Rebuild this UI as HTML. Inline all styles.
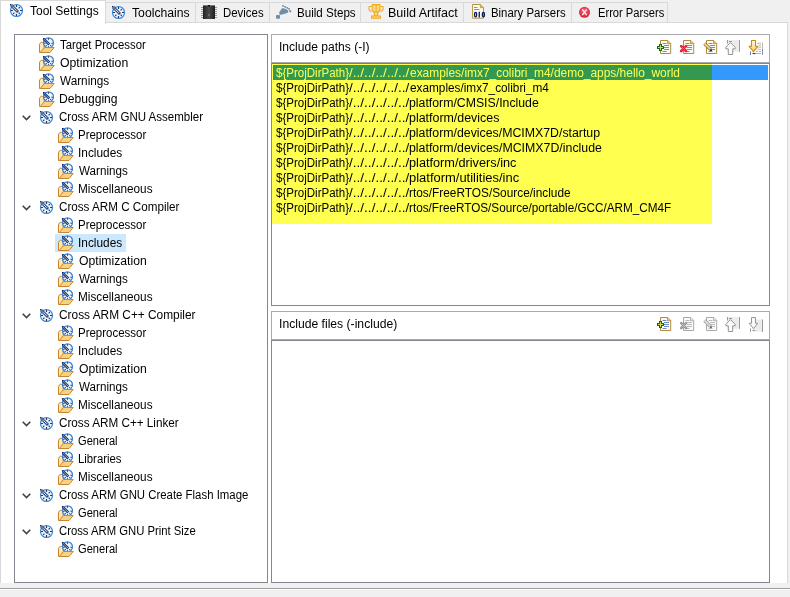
<!DOCTYPE html>
<html><head><meta charset="utf-8"><style>
html,body{margin:0;padding:0;width:790px;height:597px;overflow:hidden;background:#f0f0f0;position:relative}
*{box-sizing:border-box}
.a{position:absolute}
.t{position:absolute;font-family:"Liberation Sans", sans-serif;font-size:12px;line-height:15px;white-space:nowrap;transform-origin:0 0}
svg.i{position:absolute;width:16px;height:16px;overflow:visible}
</style></head><body>
<svg class="a" style="left:0;top:0;z-index:1" width="790" height="597" viewBox="0 0 790 597"><defs><linearGradient id="gv" x1="0" y1="0" x2="0" y2="1"><stop offset="0" stop-color="#c8c8a0"/><stop offset="1" stop-color="#7080b0"/></linearGradient><linearGradient id="gd" x1="0" y1="0" x2="0" y2="1"><stop offset="0" stop-color="#fffdf0"/><stop offset="1" stop-color="#f8d060"/></linearGradient><linearGradient id="gc" x1="0" y1="0" x2="1" y2="0"><stop offset="0" stop-color="#222"/><stop offset="0.5" stop-color="#4a4a4a"/><stop offset="1" stop-color="#1e1e1e"/></linearGradient><radialGradient id="ge" cx="0.5" cy="0.4" r="0.6"><stop offset="0" stop-color="#f47080"/><stop offset="1" stop-color="#dc1c30"/></radialGradient></defs><g transform="translate(9,2)">
  <circle cx="7.5" cy="8.5" r="6" fill="#eef4fb" stroke="#3a86d4" stroke-width="1.2"/>
  <g stroke="#1f3a68" stroke-width="1.2">
   <path d="M7.5 3v2M7.5 12v2M2 8.5h2M11 8.5h2M4.2 11.8l1.2-1.2M10.8 11.8l-1.2-1.2M10.8 5.2l-1.2 1.2"/>
  </g>
  <path d="M2 3 L9 10" stroke="#1a3c8c" stroke-width="2.8"/>
  <path d="M2.6 3.6 L8.2 9.2" stroke="#f6eeb0" stroke-width="1.2" stroke-dasharray="1.1 0.6"/>
  <rect x="1" y="2" width="1.1" height="1.1" fill="#202048"/>
 </g><g transform="translate(111,4)">
  <circle cx="7.5" cy="8.5" r="6" fill="#eef4fb" stroke="#3a86d4" stroke-width="1.2"/>
  <g stroke="#1f3a68" stroke-width="1.2">
   <path d="M7.5 3v2M7.5 12v2M2 8.5h2M11 8.5h2M4.2 11.8l1.2-1.2M10.8 11.8l-1.2-1.2M10.8 5.2l-1.2 1.2"/>
  </g>
  <path d="M2 3 L9 10" stroke="#1a3c8c" stroke-width="2.8"/>
  <path d="M2.6 3.6 L8.2 9.2" stroke="#f6eeb0" stroke-width="1.2" stroke-dasharray="1.1 0.6"/>
  <rect x="1" y="2" width="1.1" height="1.1" fill="#202048"/>
 </g><g transform="translate(39,37)">
  <path d="M0.5 7.2 L2.2 5.2 L3.5 5.2 L5.2 7 L5.2 15.5 L0.5 15.5 Z" fill="#fbe8b8" stroke="#c8852e" stroke-width="1"/>
  <circle cx="9.5" cy="5.8" r="5" fill="#f2f6fb" stroke="#3a80d0" stroke-width="1.2"/>
  <g stroke="#1f3a68" stroke-width="1.1"><path d="M9.5 1.3v1.4M12.4 6.3h1.5M5.1 6.3h1.5M12.2 8.9l-0.9-0.8M6.8 8.9l0.9-0.8M9.5 9.2v1"/></g>
  <path d="M4.6 1.8 L10.3 7.5" stroke="#173a8c" stroke-width="2.6"/>
  <path d="M5.3 2.5 L9.6 6.8" stroke="#f4eaa0" stroke-width="1" stroke-dasharray="1 0.7"/>
  <rect x="4" y="1" width="1.1" height="1.1" fill="#20204a"/>
  <path d="M5.5 10.5 L15.2 10.5 L11 15.5 L1.2 15.5 Z" fill="#f6d382" stroke="#c8852e" stroke-width="1" stroke-linejoin="round"/>
 </g><g transform="translate(39,55)">
  <path d="M0.5 7.2 L2.2 5.2 L3.5 5.2 L5.2 7 L5.2 15.5 L0.5 15.5 Z" fill="#fbe8b8" stroke="#c8852e" stroke-width="1"/>
  <circle cx="9.5" cy="5.8" r="5" fill="#f2f6fb" stroke="#3a80d0" stroke-width="1.2"/>
  <g stroke="#1f3a68" stroke-width="1.1"><path d="M9.5 1.3v1.4M12.4 6.3h1.5M5.1 6.3h1.5M12.2 8.9l-0.9-0.8M6.8 8.9l0.9-0.8M9.5 9.2v1"/></g>
  <path d="M4.6 1.8 L10.3 7.5" stroke="#173a8c" stroke-width="2.6"/>
  <path d="M5.3 2.5 L9.6 6.8" stroke="#f4eaa0" stroke-width="1" stroke-dasharray="1 0.7"/>
  <rect x="4" y="1" width="1.1" height="1.1" fill="#20204a"/>
  <path d="M5.5 10.5 L15.2 10.5 L11 15.5 L1.2 15.5 Z" fill="#f6d382" stroke="#c8852e" stroke-width="1" stroke-linejoin="round"/>
 </g><g transform="translate(39,73)">
  <path d="M0.5 7.2 L2.2 5.2 L3.5 5.2 L5.2 7 L5.2 15.5 L0.5 15.5 Z" fill="#fbe8b8" stroke="#c8852e" stroke-width="1"/>
  <circle cx="9.5" cy="5.8" r="5" fill="#f2f6fb" stroke="#3a80d0" stroke-width="1.2"/>
  <g stroke="#1f3a68" stroke-width="1.1"><path d="M9.5 1.3v1.4M12.4 6.3h1.5M5.1 6.3h1.5M12.2 8.9l-0.9-0.8M6.8 8.9l0.9-0.8M9.5 9.2v1"/></g>
  <path d="M4.6 1.8 L10.3 7.5" stroke="#173a8c" stroke-width="2.6"/>
  <path d="M5.3 2.5 L9.6 6.8" stroke="#f4eaa0" stroke-width="1" stroke-dasharray="1 0.7"/>
  <rect x="4" y="1" width="1.1" height="1.1" fill="#20204a"/>
  <path d="M5.5 10.5 L15.2 10.5 L11 15.5 L1.2 15.5 Z" fill="#f6d382" stroke="#c8852e" stroke-width="1" stroke-linejoin="round"/>
 </g><g transform="translate(39,91)">
  <path d="M0.5 7.2 L2.2 5.2 L3.5 5.2 L5.2 7 L5.2 15.5 L0.5 15.5 Z" fill="#fbe8b8" stroke="#c8852e" stroke-width="1"/>
  <circle cx="9.5" cy="5.8" r="5" fill="#f2f6fb" stroke="#3a80d0" stroke-width="1.2"/>
  <g stroke="#1f3a68" stroke-width="1.1"><path d="M9.5 1.3v1.4M12.4 6.3h1.5M5.1 6.3h1.5M12.2 8.9l-0.9-0.8M6.8 8.9l0.9-0.8M9.5 9.2v1"/></g>
  <path d="M4.6 1.8 L10.3 7.5" stroke="#173a8c" stroke-width="2.6"/>
  <path d="M5.3 2.5 L9.6 6.8" stroke="#f4eaa0" stroke-width="1" stroke-dasharray="1 0.7"/>
  <rect x="4" y="1" width="1.1" height="1.1" fill="#20204a"/>
  <path d="M5.5 10.5 L15.2 10.5 L11 15.5 L1.2 15.5 Z" fill="#f6d382" stroke="#c8852e" stroke-width="1" stroke-linejoin="round"/>
 </g><g transform="translate(22,115)"><path d="M0.7 0.7 L4.5 4.5 L8.3 0.7" fill="none" stroke="#444" stroke-width="1.6"/></g><g transform="translate(39,109)">
  <circle cx="7.5" cy="8.5" r="6" fill="#eef4fb" stroke="#3a86d4" stroke-width="1.2"/>
  <g stroke="#1f3a68" stroke-width="1.2">
   <path d="M7.5 3v2M7.5 12v2M2 8.5h2M11 8.5h2M4.2 11.8l1.2-1.2M10.8 11.8l-1.2-1.2M10.8 5.2l-1.2 1.2"/>
  </g>
  <path d="M2 3 L9 10" stroke="#1a3c8c" stroke-width="2.8"/>
  <path d="M2.6 3.6 L8.2 9.2" stroke="#f6eeb0" stroke-width="1.2" stroke-dasharray="1.1 0.6"/>
  <rect x="1" y="2" width="1.1" height="1.1" fill="#202048"/>
 </g><g transform="translate(58,127)">
  <path d="M0.5 7.2 L2.2 5.2 L3.5 5.2 L5.2 7 L5.2 15.5 L0.5 15.5 Z" fill="#fbe8b8" stroke="#c8852e" stroke-width="1"/>
  <circle cx="9.5" cy="5.8" r="5" fill="#f2f6fb" stroke="#3a80d0" stroke-width="1.2"/>
  <g stroke="#1f3a68" stroke-width="1.1"><path d="M9.5 1.3v1.4M12.4 6.3h1.5M5.1 6.3h1.5M12.2 8.9l-0.9-0.8M6.8 8.9l0.9-0.8M9.5 9.2v1"/></g>
  <path d="M4.6 1.8 L10.3 7.5" stroke="#173a8c" stroke-width="2.6"/>
  <path d="M5.3 2.5 L9.6 6.8" stroke="#f4eaa0" stroke-width="1" stroke-dasharray="1 0.7"/>
  <rect x="4" y="1" width="1.1" height="1.1" fill="#20204a"/>
  <path d="M5.5 10.5 L15.2 10.5 L11 15.5 L1.2 15.5 Z" fill="#f6d382" stroke="#c8852e" stroke-width="1" stroke-linejoin="round"/>
 </g><g transform="translate(58,145)">
  <path d="M0.5 7.2 L2.2 5.2 L3.5 5.2 L5.2 7 L5.2 15.5 L0.5 15.5 Z" fill="#fbe8b8" stroke="#c8852e" stroke-width="1"/>
  <circle cx="9.5" cy="5.8" r="5" fill="#f2f6fb" stroke="#3a80d0" stroke-width="1.2"/>
  <g stroke="#1f3a68" stroke-width="1.1"><path d="M9.5 1.3v1.4M12.4 6.3h1.5M5.1 6.3h1.5M12.2 8.9l-0.9-0.8M6.8 8.9l0.9-0.8M9.5 9.2v1"/></g>
  <path d="M4.6 1.8 L10.3 7.5" stroke="#173a8c" stroke-width="2.6"/>
  <path d="M5.3 2.5 L9.6 6.8" stroke="#f4eaa0" stroke-width="1" stroke-dasharray="1 0.7"/>
  <rect x="4" y="1" width="1.1" height="1.1" fill="#20204a"/>
  <path d="M5.5 10.5 L15.2 10.5 L11 15.5 L1.2 15.5 Z" fill="#f6d382" stroke="#c8852e" stroke-width="1" stroke-linejoin="round"/>
 </g><g transform="translate(58,163)">
  <path d="M0.5 7.2 L2.2 5.2 L3.5 5.2 L5.2 7 L5.2 15.5 L0.5 15.5 Z" fill="#fbe8b8" stroke="#c8852e" stroke-width="1"/>
  <circle cx="9.5" cy="5.8" r="5" fill="#f2f6fb" stroke="#3a80d0" stroke-width="1.2"/>
  <g stroke="#1f3a68" stroke-width="1.1"><path d="M9.5 1.3v1.4M12.4 6.3h1.5M5.1 6.3h1.5M12.2 8.9l-0.9-0.8M6.8 8.9l0.9-0.8M9.5 9.2v1"/></g>
  <path d="M4.6 1.8 L10.3 7.5" stroke="#173a8c" stroke-width="2.6"/>
  <path d="M5.3 2.5 L9.6 6.8" stroke="#f4eaa0" stroke-width="1" stroke-dasharray="1 0.7"/>
  <rect x="4" y="1" width="1.1" height="1.1" fill="#20204a"/>
  <path d="M5.5 10.5 L15.2 10.5 L11 15.5 L1.2 15.5 Z" fill="#f6d382" stroke="#c8852e" stroke-width="1" stroke-linejoin="round"/>
 </g><g transform="translate(58,181)">
  <path d="M0.5 7.2 L2.2 5.2 L3.5 5.2 L5.2 7 L5.2 15.5 L0.5 15.5 Z" fill="#fbe8b8" stroke="#c8852e" stroke-width="1"/>
  <circle cx="9.5" cy="5.8" r="5" fill="#f2f6fb" stroke="#3a80d0" stroke-width="1.2"/>
  <g stroke="#1f3a68" stroke-width="1.1"><path d="M9.5 1.3v1.4M12.4 6.3h1.5M5.1 6.3h1.5M12.2 8.9l-0.9-0.8M6.8 8.9l0.9-0.8M9.5 9.2v1"/></g>
  <path d="M4.6 1.8 L10.3 7.5" stroke="#173a8c" stroke-width="2.6"/>
  <path d="M5.3 2.5 L9.6 6.8" stroke="#f4eaa0" stroke-width="1" stroke-dasharray="1 0.7"/>
  <rect x="4" y="1" width="1.1" height="1.1" fill="#20204a"/>
  <path d="M5.5 10.5 L15.2 10.5 L11 15.5 L1.2 15.5 Z" fill="#f6d382" stroke="#c8852e" stroke-width="1" stroke-linejoin="round"/>
 </g><g transform="translate(22,205)"><path d="M0.7 0.7 L4.5 4.5 L8.3 0.7" fill="none" stroke="#444" stroke-width="1.6"/></g><g transform="translate(39,199)">
  <circle cx="7.5" cy="8.5" r="6" fill="#eef4fb" stroke="#3a86d4" stroke-width="1.2"/>
  <g stroke="#1f3a68" stroke-width="1.2">
   <path d="M7.5 3v2M7.5 12v2M2 8.5h2M11 8.5h2M4.2 11.8l1.2-1.2M10.8 11.8l-1.2-1.2M10.8 5.2l-1.2 1.2"/>
  </g>
  <path d="M2 3 L9 10" stroke="#1a3c8c" stroke-width="2.8"/>
  <path d="M2.6 3.6 L8.2 9.2" stroke="#f6eeb0" stroke-width="1.2" stroke-dasharray="1.1 0.6"/>
  <rect x="1" y="2" width="1.1" height="1.1" fill="#202048"/>
 </g><g transform="translate(58,217)">
  <path d="M0.5 7.2 L2.2 5.2 L3.5 5.2 L5.2 7 L5.2 15.5 L0.5 15.5 Z" fill="#fbe8b8" stroke="#c8852e" stroke-width="1"/>
  <circle cx="9.5" cy="5.8" r="5" fill="#f2f6fb" stroke="#3a80d0" stroke-width="1.2"/>
  <g stroke="#1f3a68" stroke-width="1.1"><path d="M9.5 1.3v1.4M12.4 6.3h1.5M5.1 6.3h1.5M12.2 8.9l-0.9-0.8M6.8 8.9l0.9-0.8M9.5 9.2v1"/></g>
  <path d="M4.6 1.8 L10.3 7.5" stroke="#173a8c" stroke-width="2.6"/>
  <path d="M5.3 2.5 L9.6 6.8" stroke="#f4eaa0" stroke-width="1" stroke-dasharray="1 0.7"/>
  <rect x="4" y="1" width="1.1" height="1.1" fill="#20204a"/>
  <path d="M5.5 10.5 L15.2 10.5 L11 15.5 L1.2 15.5 Z" fill="#f6d382" stroke="#c8852e" stroke-width="1" stroke-linejoin="round"/>
 </g><g transform="translate(58,235)">
  <path d="M0.5 7.2 L2.2 5.2 L3.5 5.2 L5.2 7 L5.2 15.5 L0.5 15.5 Z" fill="#fbe8b8" stroke="#c8852e" stroke-width="1"/>
  <circle cx="9.5" cy="5.8" r="5" fill="#f2f6fb" stroke="#3a80d0" stroke-width="1.2"/>
  <g stroke="#1f3a68" stroke-width="1.1"><path d="M9.5 1.3v1.4M12.4 6.3h1.5M5.1 6.3h1.5M12.2 8.9l-0.9-0.8M6.8 8.9l0.9-0.8M9.5 9.2v1"/></g>
  <path d="M4.6 1.8 L10.3 7.5" stroke="#173a8c" stroke-width="2.6"/>
  <path d="M5.3 2.5 L9.6 6.8" stroke="#f4eaa0" stroke-width="1" stroke-dasharray="1 0.7"/>
  <rect x="4" y="1" width="1.1" height="1.1" fill="#20204a"/>
  <path d="M5.5 10.5 L15.2 10.5 L11 15.5 L1.2 15.5 Z" fill="#f6d382" stroke="#c8852e" stroke-width="1" stroke-linejoin="round"/>
 </g><g transform="translate(58,253)">
  <path d="M0.5 7.2 L2.2 5.2 L3.5 5.2 L5.2 7 L5.2 15.5 L0.5 15.5 Z" fill="#fbe8b8" stroke="#c8852e" stroke-width="1"/>
  <circle cx="9.5" cy="5.8" r="5" fill="#f2f6fb" stroke="#3a80d0" stroke-width="1.2"/>
  <g stroke="#1f3a68" stroke-width="1.1"><path d="M9.5 1.3v1.4M12.4 6.3h1.5M5.1 6.3h1.5M12.2 8.9l-0.9-0.8M6.8 8.9l0.9-0.8M9.5 9.2v1"/></g>
  <path d="M4.6 1.8 L10.3 7.5" stroke="#173a8c" stroke-width="2.6"/>
  <path d="M5.3 2.5 L9.6 6.8" stroke="#f4eaa0" stroke-width="1" stroke-dasharray="1 0.7"/>
  <rect x="4" y="1" width="1.1" height="1.1" fill="#20204a"/>
  <path d="M5.5 10.5 L15.2 10.5 L11 15.5 L1.2 15.5 Z" fill="#f6d382" stroke="#c8852e" stroke-width="1" stroke-linejoin="round"/>
 </g><g transform="translate(58,271)">
  <path d="M0.5 7.2 L2.2 5.2 L3.5 5.2 L5.2 7 L5.2 15.5 L0.5 15.5 Z" fill="#fbe8b8" stroke="#c8852e" stroke-width="1"/>
  <circle cx="9.5" cy="5.8" r="5" fill="#f2f6fb" stroke="#3a80d0" stroke-width="1.2"/>
  <g stroke="#1f3a68" stroke-width="1.1"><path d="M9.5 1.3v1.4M12.4 6.3h1.5M5.1 6.3h1.5M12.2 8.9l-0.9-0.8M6.8 8.9l0.9-0.8M9.5 9.2v1"/></g>
  <path d="M4.6 1.8 L10.3 7.5" stroke="#173a8c" stroke-width="2.6"/>
  <path d="M5.3 2.5 L9.6 6.8" stroke="#f4eaa0" stroke-width="1" stroke-dasharray="1 0.7"/>
  <rect x="4" y="1" width="1.1" height="1.1" fill="#20204a"/>
  <path d="M5.5 10.5 L15.2 10.5 L11 15.5 L1.2 15.5 Z" fill="#f6d382" stroke="#c8852e" stroke-width="1" stroke-linejoin="round"/>
 </g><g transform="translate(58,289)">
  <path d="M0.5 7.2 L2.2 5.2 L3.5 5.2 L5.2 7 L5.2 15.5 L0.5 15.5 Z" fill="#fbe8b8" stroke="#c8852e" stroke-width="1"/>
  <circle cx="9.5" cy="5.8" r="5" fill="#f2f6fb" stroke="#3a80d0" stroke-width="1.2"/>
  <g stroke="#1f3a68" stroke-width="1.1"><path d="M9.5 1.3v1.4M12.4 6.3h1.5M5.1 6.3h1.5M12.2 8.9l-0.9-0.8M6.8 8.9l0.9-0.8M9.5 9.2v1"/></g>
  <path d="M4.6 1.8 L10.3 7.5" stroke="#173a8c" stroke-width="2.6"/>
  <path d="M5.3 2.5 L9.6 6.8" stroke="#f4eaa0" stroke-width="1" stroke-dasharray="1 0.7"/>
  <rect x="4" y="1" width="1.1" height="1.1" fill="#20204a"/>
  <path d="M5.5 10.5 L15.2 10.5 L11 15.5 L1.2 15.5 Z" fill="#f6d382" stroke="#c8852e" stroke-width="1" stroke-linejoin="round"/>
 </g><g transform="translate(22,313)"><path d="M0.7 0.7 L4.5 4.5 L8.3 0.7" fill="none" stroke="#444" stroke-width="1.6"/></g><g transform="translate(39,307)">
  <circle cx="7.5" cy="8.5" r="6" fill="#eef4fb" stroke="#3a86d4" stroke-width="1.2"/>
  <g stroke="#1f3a68" stroke-width="1.2">
   <path d="M7.5 3v2M7.5 12v2M2 8.5h2M11 8.5h2M4.2 11.8l1.2-1.2M10.8 11.8l-1.2-1.2M10.8 5.2l-1.2 1.2"/>
  </g>
  <path d="M2 3 L9 10" stroke="#1a3c8c" stroke-width="2.8"/>
  <path d="M2.6 3.6 L8.2 9.2" stroke="#f6eeb0" stroke-width="1.2" stroke-dasharray="1.1 0.6"/>
  <rect x="1" y="2" width="1.1" height="1.1" fill="#202048"/>
 </g><g transform="translate(58,325)">
  <path d="M0.5 7.2 L2.2 5.2 L3.5 5.2 L5.2 7 L5.2 15.5 L0.5 15.5 Z" fill="#fbe8b8" stroke="#c8852e" stroke-width="1"/>
  <circle cx="9.5" cy="5.8" r="5" fill="#f2f6fb" stroke="#3a80d0" stroke-width="1.2"/>
  <g stroke="#1f3a68" stroke-width="1.1"><path d="M9.5 1.3v1.4M12.4 6.3h1.5M5.1 6.3h1.5M12.2 8.9l-0.9-0.8M6.8 8.9l0.9-0.8M9.5 9.2v1"/></g>
  <path d="M4.6 1.8 L10.3 7.5" stroke="#173a8c" stroke-width="2.6"/>
  <path d="M5.3 2.5 L9.6 6.8" stroke="#f4eaa0" stroke-width="1" stroke-dasharray="1 0.7"/>
  <rect x="4" y="1" width="1.1" height="1.1" fill="#20204a"/>
  <path d="M5.5 10.5 L15.2 10.5 L11 15.5 L1.2 15.5 Z" fill="#f6d382" stroke="#c8852e" stroke-width="1" stroke-linejoin="round"/>
 </g><g transform="translate(58,343)">
  <path d="M0.5 7.2 L2.2 5.2 L3.5 5.2 L5.2 7 L5.2 15.5 L0.5 15.5 Z" fill="#fbe8b8" stroke="#c8852e" stroke-width="1"/>
  <circle cx="9.5" cy="5.8" r="5" fill="#f2f6fb" stroke="#3a80d0" stroke-width="1.2"/>
  <g stroke="#1f3a68" stroke-width="1.1"><path d="M9.5 1.3v1.4M12.4 6.3h1.5M5.1 6.3h1.5M12.2 8.9l-0.9-0.8M6.8 8.9l0.9-0.8M9.5 9.2v1"/></g>
  <path d="M4.6 1.8 L10.3 7.5" stroke="#173a8c" stroke-width="2.6"/>
  <path d="M5.3 2.5 L9.6 6.8" stroke="#f4eaa0" stroke-width="1" stroke-dasharray="1 0.7"/>
  <rect x="4" y="1" width="1.1" height="1.1" fill="#20204a"/>
  <path d="M5.5 10.5 L15.2 10.5 L11 15.5 L1.2 15.5 Z" fill="#f6d382" stroke="#c8852e" stroke-width="1" stroke-linejoin="round"/>
 </g><g transform="translate(58,361)">
  <path d="M0.5 7.2 L2.2 5.2 L3.5 5.2 L5.2 7 L5.2 15.5 L0.5 15.5 Z" fill="#fbe8b8" stroke="#c8852e" stroke-width="1"/>
  <circle cx="9.5" cy="5.8" r="5" fill="#f2f6fb" stroke="#3a80d0" stroke-width="1.2"/>
  <g stroke="#1f3a68" stroke-width="1.1"><path d="M9.5 1.3v1.4M12.4 6.3h1.5M5.1 6.3h1.5M12.2 8.9l-0.9-0.8M6.8 8.9l0.9-0.8M9.5 9.2v1"/></g>
  <path d="M4.6 1.8 L10.3 7.5" stroke="#173a8c" stroke-width="2.6"/>
  <path d="M5.3 2.5 L9.6 6.8" stroke="#f4eaa0" stroke-width="1" stroke-dasharray="1 0.7"/>
  <rect x="4" y="1" width="1.1" height="1.1" fill="#20204a"/>
  <path d="M5.5 10.5 L15.2 10.5 L11 15.5 L1.2 15.5 Z" fill="#f6d382" stroke="#c8852e" stroke-width="1" stroke-linejoin="round"/>
 </g><g transform="translate(58,379)">
  <path d="M0.5 7.2 L2.2 5.2 L3.5 5.2 L5.2 7 L5.2 15.5 L0.5 15.5 Z" fill="#fbe8b8" stroke="#c8852e" stroke-width="1"/>
  <circle cx="9.5" cy="5.8" r="5" fill="#f2f6fb" stroke="#3a80d0" stroke-width="1.2"/>
  <g stroke="#1f3a68" stroke-width="1.1"><path d="M9.5 1.3v1.4M12.4 6.3h1.5M5.1 6.3h1.5M12.2 8.9l-0.9-0.8M6.8 8.9l0.9-0.8M9.5 9.2v1"/></g>
  <path d="M4.6 1.8 L10.3 7.5" stroke="#173a8c" stroke-width="2.6"/>
  <path d="M5.3 2.5 L9.6 6.8" stroke="#f4eaa0" stroke-width="1" stroke-dasharray="1 0.7"/>
  <rect x="4" y="1" width="1.1" height="1.1" fill="#20204a"/>
  <path d="M5.5 10.5 L15.2 10.5 L11 15.5 L1.2 15.5 Z" fill="#f6d382" stroke="#c8852e" stroke-width="1" stroke-linejoin="round"/>
 </g><g transform="translate(58,397)">
  <path d="M0.5 7.2 L2.2 5.2 L3.5 5.2 L5.2 7 L5.2 15.5 L0.5 15.5 Z" fill="#fbe8b8" stroke="#c8852e" stroke-width="1"/>
  <circle cx="9.5" cy="5.8" r="5" fill="#f2f6fb" stroke="#3a80d0" stroke-width="1.2"/>
  <g stroke="#1f3a68" stroke-width="1.1"><path d="M9.5 1.3v1.4M12.4 6.3h1.5M5.1 6.3h1.5M12.2 8.9l-0.9-0.8M6.8 8.9l0.9-0.8M9.5 9.2v1"/></g>
  <path d="M4.6 1.8 L10.3 7.5" stroke="#173a8c" stroke-width="2.6"/>
  <path d="M5.3 2.5 L9.6 6.8" stroke="#f4eaa0" stroke-width="1" stroke-dasharray="1 0.7"/>
  <rect x="4" y="1" width="1.1" height="1.1" fill="#20204a"/>
  <path d="M5.5 10.5 L15.2 10.5 L11 15.5 L1.2 15.5 Z" fill="#f6d382" stroke="#c8852e" stroke-width="1" stroke-linejoin="round"/>
 </g><g transform="translate(22,421)"><path d="M0.7 0.7 L4.5 4.5 L8.3 0.7" fill="none" stroke="#444" stroke-width="1.6"/></g><g transform="translate(39,415)">
  <circle cx="7.5" cy="8.5" r="6" fill="#eef4fb" stroke="#3a86d4" stroke-width="1.2"/>
  <g stroke="#1f3a68" stroke-width="1.2">
   <path d="M7.5 3v2M7.5 12v2M2 8.5h2M11 8.5h2M4.2 11.8l1.2-1.2M10.8 11.8l-1.2-1.2M10.8 5.2l-1.2 1.2"/>
  </g>
  <path d="M2 3 L9 10" stroke="#1a3c8c" stroke-width="2.8"/>
  <path d="M2.6 3.6 L8.2 9.2" stroke="#f6eeb0" stroke-width="1.2" stroke-dasharray="1.1 0.6"/>
  <rect x="1" y="2" width="1.1" height="1.1" fill="#202048"/>
 </g><g transform="translate(58,433)">
  <path d="M0.5 7.2 L2.2 5.2 L3.5 5.2 L5.2 7 L5.2 15.5 L0.5 15.5 Z" fill="#fbe8b8" stroke="#c8852e" stroke-width="1"/>
  <circle cx="9.5" cy="5.8" r="5" fill="#f2f6fb" stroke="#3a80d0" stroke-width="1.2"/>
  <g stroke="#1f3a68" stroke-width="1.1"><path d="M9.5 1.3v1.4M12.4 6.3h1.5M5.1 6.3h1.5M12.2 8.9l-0.9-0.8M6.8 8.9l0.9-0.8M9.5 9.2v1"/></g>
  <path d="M4.6 1.8 L10.3 7.5" stroke="#173a8c" stroke-width="2.6"/>
  <path d="M5.3 2.5 L9.6 6.8" stroke="#f4eaa0" stroke-width="1" stroke-dasharray="1 0.7"/>
  <rect x="4" y="1" width="1.1" height="1.1" fill="#20204a"/>
  <path d="M5.5 10.5 L15.2 10.5 L11 15.5 L1.2 15.5 Z" fill="#f6d382" stroke="#c8852e" stroke-width="1" stroke-linejoin="round"/>
 </g><g transform="translate(58,451)">
  <path d="M0.5 7.2 L2.2 5.2 L3.5 5.2 L5.2 7 L5.2 15.5 L0.5 15.5 Z" fill="#fbe8b8" stroke="#c8852e" stroke-width="1"/>
  <circle cx="9.5" cy="5.8" r="5" fill="#f2f6fb" stroke="#3a80d0" stroke-width="1.2"/>
  <g stroke="#1f3a68" stroke-width="1.1"><path d="M9.5 1.3v1.4M12.4 6.3h1.5M5.1 6.3h1.5M12.2 8.9l-0.9-0.8M6.8 8.9l0.9-0.8M9.5 9.2v1"/></g>
  <path d="M4.6 1.8 L10.3 7.5" stroke="#173a8c" stroke-width="2.6"/>
  <path d="M5.3 2.5 L9.6 6.8" stroke="#f4eaa0" stroke-width="1" stroke-dasharray="1 0.7"/>
  <rect x="4" y="1" width="1.1" height="1.1" fill="#20204a"/>
  <path d="M5.5 10.5 L15.2 10.5 L11 15.5 L1.2 15.5 Z" fill="#f6d382" stroke="#c8852e" stroke-width="1" stroke-linejoin="round"/>
 </g><g transform="translate(58,469)">
  <path d="M0.5 7.2 L2.2 5.2 L3.5 5.2 L5.2 7 L5.2 15.5 L0.5 15.5 Z" fill="#fbe8b8" stroke="#c8852e" stroke-width="1"/>
  <circle cx="9.5" cy="5.8" r="5" fill="#f2f6fb" stroke="#3a80d0" stroke-width="1.2"/>
  <g stroke="#1f3a68" stroke-width="1.1"><path d="M9.5 1.3v1.4M12.4 6.3h1.5M5.1 6.3h1.5M12.2 8.9l-0.9-0.8M6.8 8.9l0.9-0.8M9.5 9.2v1"/></g>
  <path d="M4.6 1.8 L10.3 7.5" stroke="#173a8c" stroke-width="2.6"/>
  <path d="M5.3 2.5 L9.6 6.8" stroke="#f4eaa0" stroke-width="1" stroke-dasharray="1 0.7"/>
  <rect x="4" y="1" width="1.1" height="1.1" fill="#20204a"/>
  <path d="M5.5 10.5 L15.2 10.5 L11 15.5 L1.2 15.5 Z" fill="#f6d382" stroke="#c8852e" stroke-width="1" stroke-linejoin="round"/>
 </g><g transform="translate(22,493)"><path d="M0.7 0.7 L4.5 4.5 L8.3 0.7" fill="none" stroke="#444" stroke-width="1.6"/></g><g transform="translate(39,487)">
  <circle cx="7.5" cy="8.5" r="6" fill="#eef4fb" stroke="#3a86d4" stroke-width="1.2"/>
  <g stroke="#1f3a68" stroke-width="1.2">
   <path d="M7.5 3v2M7.5 12v2M2 8.5h2M11 8.5h2M4.2 11.8l1.2-1.2M10.8 11.8l-1.2-1.2M10.8 5.2l-1.2 1.2"/>
  </g>
  <path d="M2 3 L9 10" stroke="#1a3c8c" stroke-width="2.8"/>
  <path d="M2.6 3.6 L8.2 9.2" stroke="#f6eeb0" stroke-width="1.2" stroke-dasharray="1.1 0.6"/>
  <rect x="1" y="2" width="1.1" height="1.1" fill="#202048"/>
 </g><g transform="translate(58,505)">
  <path d="M0.5 7.2 L2.2 5.2 L3.5 5.2 L5.2 7 L5.2 15.5 L0.5 15.5 Z" fill="#fbe8b8" stroke="#c8852e" stroke-width="1"/>
  <circle cx="9.5" cy="5.8" r="5" fill="#f2f6fb" stroke="#3a80d0" stroke-width="1.2"/>
  <g stroke="#1f3a68" stroke-width="1.1"><path d="M9.5 1.3v1.4M12.4 6.3h1.5M5.1 6.3h1.5M12.2 8.9l-0.9-0.8M6.8 8.9l0.9-0.8M9.5 9.2v1"/></g>
  <path d="M4.6 1.8 L10.3 7.5" stroke="#173a8c" stroke-width="2.6"/>
  <path d="M5.3 2.5 L9.6 6.8" stroke="#f4eaa0" stroke-width="1" stroke-dasharray="1 0.7"/>
  <rect x="4" y="1" width="1.1" height="1.1" fill="#20204a"/>
  <path d="M5.5 10.5 L15.2 10.5 L11 15.5 L1.2 15.5 Z" fill="#f6d382" stroke="#c8852e" stroke-width="1" stroke-linejoin="round"/>
 </g><g transform="translate(22,529)"><path d="M0.7 0.7 L4.5 4.5 L8.3 0.7" fill="none" stroke="#444" stroke-width="1.6"/></g><g transform="translate(39,523)">
  <circle cx="7.5" cy="8.5" r="6" fill="#eef4fb" stroke="#3a86d4" stroke-width="1.2"/>
  <g stroke="#1f3a68" stroke-width="1.2">
   <path d="M7.5 3v2M7.5 12v2M2 8.5h2M11 8.5h2M4.2 11.8l1.2-1.2M10.8 11.8l-1.2-1.2M10.8 5.2l-1.2 1.2"/>
  </g>
  <path d="M2 3 L9 10" stroke="#1a3c8c" stroke-width="2.8"/>
  <path d="M2.6 3.6 L8.2 9.2" stroke="#f6eeb0" stroke-width="1.2" stroke-dasharray="1.1 0.6"/>
  <rect x="1" y="2" width="1.1" height="1.1" fill="#202048"/>
 </g><g transform="translate(58,541)">
  <path d="M0.5 7.2 L2.2 5.2 L3.5 5.2 L5.2 7 L5.2 15.5 L0.5 15.5 Z" fill="#fbe8b8" stroke="#c8852e" stroke-width="1"/>
  <circle cx="9.5" cy="5.8" r="5" fill="#f2f6fb" stroke="#3a80d0" stroke-width="1.2"/>
  <g stroke="#1f3a68" stroke-width="1.1"><path d="M9.5 1.3v1.4M12.4 6.3h1.5M5.1 6.3h1.5M12.2 8.9l-0.9-0.8M6.8 8.9l0.9-0.8M9.5 9.2v1"/></g>
  <path d="M4.6 1.8 L10.3 7.5" stroke="#173a8c" stroke-width="2.6"/>
  <path d="M5.3 2.5 L9.6 6.8" stroke="#f4eaa0" stroke-width="1" stroke-dasharray="1 0.7"/>
  <rect x="4" y="1" width="1.1" height="1.1" fill="#20204a"/>
  <path d="M5.5 10.5 L15.2 10.5 L11 15.5 L1.2 15.5 Z" fill="#f6d382" stroke="#c8852e" stroke-width="1" stroke-linejoin="round"/>
 </g><g transform="translate(660,40)">
  <path d="M0.5 0.5 H7.8 L10.7 3.4 V13.5 H0.5 Z" fill="#fbfbf6" stroke="#b08a3a" stroke-width="1"/>
  <path d="M7.5 0.5 V3.7 H10.7" fill="#e8c878" stroke="#b08a3a" stroke-width="0.8"/>
  <g stroke="#6f8fc4" stroke-width="1"><path d="M2.5 3.5h4M4 5.5h5M4 7.5h5M4 9.5h5M2.5 11.5h4"/></g>
 </g><g transform="translate(657,44)">
  <path d="M3.5 0 V7 M0 3.5 H7" stroke="#0f6a1c" stroke-width="3"/>
  <path d="M3.5 1 V6 M1 3.5 H6" stroke="#c4e04c" stroke-width="1"/>
 </g><g transform="translate(683,40)">
  <path d="M0.5 0.5 H7.8 L10.7 3.4 V13.5 H0.5 Z" fill="#fbfbf6" stroke="#b08a3a" stroke-width="1"/>
  <path d="M7.5 0.5 V3.7 H10.7" fill="#e8c878" stroke="#b08a3a" stroke-width="0.8"/>
  <g stroke="#6f8fc4" stroke-width="1"><path d="M2.5 3.5h4M4 5.5h5M4 7.5h5M4 9.5h5M2.5 11.5h4"/></g>
 </g><g transform="translate(680,45)">
  <path d="M1.2 1.2 L6 6 M6 1.2 L1.2 6" stroke="#dc2030" stroke-width="2.6" stroke-linecap="round"/>
  <path d="M1.6 1.6 L5.6 5.6 M5.6 1.6 L1.6 5.6" stroke="#f26878" stroke-width="0.8"/>
 </g><g transform="translate(706,40)">
  <path d="M0.5 0.5 H7.8 L10.7 3.4 V13.5 H0.5 Z" fill="#fbfbf6" stroke="#b08a3a" stroke-width="1"/>
  <path d="M7.5 0.5 V3.7 H10.7" fill="#e8c878" stroke="#b08a3a" stroke-width="0.8"/>
  <g stroke="#6f8fc4" stroke-width="1"><path d="M2.5 3.5h4M4 5.5h5M4 7.5h5M4 9.5h5M2.5 11.5h4"/></g>
 </g><g transform="translate(703,42)">
  <path d="M1.5 1.5 L7.6 7.6" stroke="#9c7424" stroke-width="3.4"/>
  <path d="M1.6 1.6 L7.3 7.3" stroke="#f3dca0" stroke-width="1.6"/>
  <rect x="7" y="7.5" width="2" height="1.5" fill="#16306a"/>
 </g><g transform="translate(726,40)">
  <rect x="1.3" y="0" width="12.5" height="11.8" fill="#ececec"/>
  <path d="M1.5 0v3.6M13.5 0v11.8" stroke="#9a9a9a" stroke-width="1"/>
  <path d="M3 1.5h3" stroke="#9a9a9a" stroke-width="1"/>
  <path d="M4.5 2.6 L9.2 7.3 V8.8 H6.7 V14.5 H2.3 V8.8 H-0.2 V7.3 Z" fill="#fafafa" stroke="#969696" stroke-width="1"/>
 </g><g transform="translate(750,40)">
  <g stroke="#a8b4d8" stroke-width="1"><path d="M7 3.3h4M8.5 5.3h2.5M8.5 7.3h2.5M7.5 9.3h3.5M6 11.5h1.5M8.5 11.5h2.5M5.5 13.5h5.5"/></g>
  
  <path d="M12.5 2.5v6" stroke="#c0bc98" stroke-width="1"/><path d="M12.5 8.5v6.5" stroke="#8890b8" stroke-width="1"/>
  <path d="M0.5 11.5v3.5" stroke="#6878a8" stroke-width="1"/>
  <path d="M2.5 13.5h3" stroke="#1f4a8c" stroke-width="1.2"/>
  
  <path d="M1.5 0.5 H5.5 V6.3 H7.8 L3.5 11.6 L-0.8 6.3 H1.5 Z" fill="url(#gd)" stroke="#c98a14" stroke-width="1.1" stroke-linejoin="round"/>
 </g><g transform="translate(660,317)">
  <path d="M0.5 0.5 H7.8 L10.7 3.4 V13.5 H0.5 Z" fill="#fbfbf6" stroke="#b08a3a" stroke-width="1"/>
  <path d="M7.5 0.5 V3.7 H10.7" fill="#e8c878" stroke="#b08a3a" stroke-width="0.8"/>
  <g stroke="#6f8fc4" stroke-width="1"><path d="M2.5 3.5h4M4 5.5h5M4 7.5h5M4 9.5h5M2.5 11.5h4"/></g>
 </g><g transform="translate(657,321)">
  <path d="M3.5 0 V7 M0 3.5 H7" stroke="#0f6a1c" stroke-width="3"/>
  <path d="M3.5 1 V6 M1 3.5 H6" stroke="#c4e04c" stroke-width="1"/>
 </g><g transform="translate(683,317)">
  <path d="M0.5 0.5 H7.8 L10.7 3.4 V13.5 H0.5 Z" fill="#fbfbfb" stroke="#a8a8a8" stroke-width="1"/>
  <path d="M7.5 0.5 V3.7 H10.7" fill="#e0e0e0" stroke="#a8a8a8" stroke-width="0.8"/>
  <g stroke="#b8b8b8" stroke-width="1"><path d="M2.5 3.5h4M4 5.5h5M4 7.5h5M4 9.5h5M2.5 11.5h4"/></g>
 </g><g transform="translate(680,322)">
  <path d="M1.2 1.2 L6 6 M6 1.2 L1.2 6" stroke="#989898" stroke-width="2.6" stroke-linecap="round"/>
  <path d="M1.6 1.6 L5.6 5.6 M5.6 1.6 L1.6 5.6" stroke="#c8c8c8" stroke-width="0.8"/>
 </g><g transform="translate(706,317)">
  <path d="M0.5 0.5 H7.8 L10.7 3.4 V13.5 H0.5 Z" fill="#fbfbfb" stroke="#a8a8a8" stroke-width="1"/>
  <path d="M7.5 0.5 V3.7 H10.7" fill="#e0e0e0" stroke="#a8a8a8" stroke-width="0.8"/>
  <g stroke="#b8b8b8" stroke-width="1"><path d="M2.5 3.5h4M4 5.5h5M4 7.5h5M4 9.5h5M2.5 11.5h4"/></g>
 </g><g transform="translate(703,319)">
  <path d="M1.5 1.5 L7.6 7.6" stroke="#9c9c9c" stroke-width="3.4"/>
  <path d="M1.6 1.6 L7.3 7.3" stroke="#e4e4e4" stroke-width="1.6"/>
  <rect x="7" y="7.5" width="2" height="1.5" fill="#707070"/>
 </g><g transform="translate(726,317)">
  <rect x="1.3" y="0" width="12.5" height="11.8" fill="#ececec"/>
  <path d="M1.5 0v3.6M13.5 0v11.8" stroke="#9a9a9a" stroke-width="1"/>
  <path d="M3 1.5h3" stroke="#9a9a9a" stroke-width="1"/>
  <path d="M4.5 2.6 L9.2 7.3 V8.8 H6.7 V14.5 H2.3 V8.8 H-0.2 V7.3 Z" fill="#fafafa" stroke="#969696" stroke-width="1"/>
 </g><g transform="translate(750,317)">
  <rect x="2" y="2.5" width="10" height="12" fill="#ececec"/>
  <path d="M0.5 11.5v3.5M12.5 2.5v12.5" stroke="#9a9a9a" stroke-width="1"/>
  <path d="M2.5 13.5h3" stroke="#9a9a9a" stroke-width="1"/>
  <path d="M1.5 0.5 H5.5 V6.3 H7.8 L3.5 11.6 L-0.8 6.3 H1.5 Z" fill="#fafafa" stroke="#969696" stroke-width="1" stroke-linejoin="round"/>
 </g><g id="chip">
 
 <g fill="#8a9ab0"><rect x="201" y="7" width="2" height="1"/><rect x="201" y="9" width="2" height="1"/><rect x="201" y="11" width="2" height="1"/><rect x="201" y="13" width="2" height="1"/><rect x="201" y="15" width="2" height="1"/><rect x="201" y="17" width="2" height="1"/>
 <rect x="215" y="7" width="2" height="1"/><rect x="215" y="9" width="2" height="1"/><rect x="215" y="11" width="2" height="1"/><rect x="215" y="13" width="2" height="1"/><rect x="215" y="15" width="2" height="1"/><rect x="215" y="17" width="2" height="1"/></g>
 <rect x="203" y="5" width="12" height="14" fill="url(#gc)"/>
 <rect x="203" y="5" width="12" height="1" fill="#777"/>
 <rect x="208" y="5" width="2" height="1.5" fill="#111"/>
 <rect x="208" y="14" width="2" height="2" fill="#666"/>
</g>
<g id="foot" fill="#6f8ea8">
 <rect x="276" y="15" width="4" height="3.7" rx="1"/>
 <path d="M279.2 12.2 L282 8.3 L283.6 8.3 L288.1 10.2 L288.1 12.6 L285 13.8 L282 14.6 L279.6 15 Z"/>
 <rect x="282.2" y="5" width="1.6" height="1.7"/>
 <rect x="284.4" y="6" width="1.6" height="1.7"/>
 <rect x="286.3" y="7" width="1.6" height="1.7"/>
 <rect x="288.2" y="8" width="1.6" height="1.7"/>
 <rect x="289.2" y="10.2" width="2" height="2"/>
</g>
<g id="trophy" stroke="#f0a828" fill="#f9d878" stroke-width="1.1">
 <path d="M369 6.5 H371.7 M380.5 6.5 H383 V9.8 L381.5 11.2 H380.5 M371.7 11.2 H370.5 L369 9.8 V6.5" fill="none"/>
 <path d="M372.2 4.6 H380 V10.5 L378.5 12 H373.6 L372.2 10.5 Z"/>
 <path d="M374.3 12 H377.8 V15.8 H374.3 Z"/>
 <path d="M371.6 16 H380.4 V18.3 H371.6 Z"/>
 <path d="M376.1 5 V11.5" stroke-width="1"/>
</g>
<g id="bin">
 <path d="M472.6 4.5 H480.5 L483.5 7.5 V18.2 H472.6 Z" fill="#fbfbf6" stroke="#b89236" stroke-width="1"/>
 <path d="M480.3 4.5 V7.7 H483.5" fill="#e6c46c" stroke="#b89236" stroke-width="0.8"/>
 <path d="M474 7.5h3.5M474 9.5h5.5" stroke="#6a88c0" stroke-width="0.9"/>
 <g fill="none" stroke="#0e1f5e" stroke-width="1.3"><rect x="474.6" y="12.4" width="2" height="4.4" rx="1"/><path d="M479.3 11.8 V17.4"/><rect x="482.4" y="12.4" width="2" height="4.4" rx="1"/></g>
</g>
<g id="err">
 
 <circle cx="584.5" cy="12.3" r="5.5" fill="url(#ge)"/>
 <path d="M582.3 9.4 L586.7 15.2 M586.7 9.4 L582.3 15.2" stroke="#fff" stroke-width="1.2"/>
</g>
</svg>
<div class="a" style="left:0;top:22px;width:788px;height:561px;background:#fff;border:1px solid #d9d9d9;border-bottom:none"></div>
<div class="a" style="left:105px;top:2px;width:91px;height:21px;background:#f0f0f0;border:1px solid #d9d9d9"></div>
<div class="a" style="left:195px;top:2px;width:75px;height:21px;background:#f0f0f0;border:1px solid #d9d9d9"></div>
<div class="a" style="left:269px;top:2px;width:92px;height:21px;background:#f0f0f0;border:1px solid #d9d9d9"></div>
<div class="a" style="left:360px;top:2px;width:104px;height:21px;background:#f0f0f0;border:1px solid #d9d9d9"></div>
<div class="a" style="left:463px;top:2px;width:109px;height:21px;background:#f0f0f0;border:1px solid #d9d9d9"></div>
<div class="a" style="left:571px;top:2px;width:97px;height:21px;background:#f0f0f0;border:1px solid #d9d9d9"></div>
<div class="a" style="left:667px;top:22px;width:121px;height:1px;background:#d9d9d9"></div>
<div class="a" style="left:0;top:0;width:106px;height:24px;background:#fff;border:1px solid #d9d9d9;border-bottom:none"></div>
<div class="a" style="left:0;top:588px;width:790px;height:1px;background:#a0a0a0"></div>
<div class="a" style="left:0;top:589px;width:790px;height:1px;background:#fff"></div>
<div class="a" style="left:14px;top:34px;width:254px;height:549px;background:#fff;border:1px solid #828790"></div>
<div class="a" style="left:55px;top:234px;width:71px;height:18px;background:#cce8ff"></div>
<div class="a" style="left:271px;top:34px;width:499px;height:29px;background:#fff;border:1px solid #a9aab0"></div>
<div class="a" style="left:271px;top:63px;width:499px;height:243px;background:#fff;border:1px solid #828790"></div>
<div class="a" style="left:273px;top:65px;width:495px;height:15px;background:#3399ff"></div>
<div class="a" style="left:271px;top:311px;width:499px;height:29px;background:#fff;border:1px solid #a9aab0"></div>
<div class="a" style="left:271px;top:340px;width:499px;height:243px;background:#fff;border:1px solid #828790"></div>

<div class="t" style="left:30.00px;top:4px;transform:scaleX(1.0000);color:#000">Tool Settings</div><div class="t" style="left:132.00px;top:6px;transform:scaleX(1.0179);color:#000">Toolchains</div><div class="t" style="left:223.00px;top:6px;transform:scaleX(0.9512);color:#000">Devices</div><div class="t" style="left:297.00px;top:6px;transform:scaleX(0.9661);color:#000">Build Steps</div><div class="t" style="left:388.00px;top:6px;transform:scaleX(1.0455);color:#000">Build Artifact</div><div class="t" style="left:491.00px;top:6px;transform:scaleX(0.9481);color:#000">Binary Parsers</div><div class="t" style="left:598.00px;top:6px;transform:scaleX(0.9286);color:#000">Error Parsers</div><div class="t" style="left:60.00px;top:38px;transform:scaleX(0.9451);color:#000">Target Processor</div><div class="t" style="left:60.00px;top:56px;transform:scaleX(1.0227);color:#000">Optimization</div><div class="t" style="left:60.00px;top:74px;transform:scaleX(0.9800);color:#000">Warnings</div><div class="t" style="left:59.00px;top:92px;transform:scaleX(1.0088);color:#000">Debugging</div><div class="t" style="left:59.00px;top:110px;transform:scaleX(0.9597);color:#000">Cross ARM GNU Assembler</div><div class="t" style="left:78.00px;top:128px;transform:scaleX(0.9571);color:#000">Preprocessor</div><div class="t" style="left:78.00px;top:146px;transform:scaleX(0.9884);color:#000">Includes</div><div class="t" style="left:79.00px;top:164px;transform:scaleX(0.9700);color:#000">Warnings</div><div class="t" style="left:78.00px;top:182px;transform:scaleX(0.9800);color:#000">Miscellaneous</div><div class="t" style="left:59.00px;top:200px;transform:scaleX(0.9715);color:#000">Cross ARM C Compiler</div><div class="t" style="left:78.00px;top:218px;transform:scaleX(0.9571);color:#000">Preprocessor</div><div class="t" style="left:78.00px;top:236px;transform:scaleX(0.9884);color:#000">Includes</div><div class="t" style="left:79.00px;top:254px;transform:scaleX(1.0152);color:#000">Optimization</div><div class="t" style="left:79.00px;top:272px;transform:scaleX(0.9700);color:#000">Warnings</div><div class="t" style="left:78.00px;top:290px;transform:scaleX(0.9800);color:#000">Miscellaneous</div><div class="t" style="left:59.00px;top:308px;transform:scaleX(0.9891);color:#000">Cross ARM C++ Compiler</div><div class="t" style="left:78.00px;top:326px;transform:scaleX(0.9571);color:#000">Preprocessor</div><div class="t" style="left:78.00px;top:344px;transform:scaleX(0.9884);color:#000">Includes</div><div class="t" style="left:79.00px;top:362px;transform:scaleX(1.0152);color:#000">Optimization</div><div class="t" style="left:79.00px;top:380px;transform:scaleX(0.9700);color:#000">Warnings</div><div class="t" style="left:78.00px;top:398px;transform:scaleX(0.9800);color:#000">Miscellaneous</div><div class="t" style="left:59.00px;top:416px;transform:scaleX(0.9754);color:#000">Cross ARM C++ Linker</div><div class="t" style="left:78.00px;top:434px;transform:scaleX(0.9268);color:#000">General</div><div class="t" style="left:78.00px;top:452px;transform:scaleX(0.9444);color:#000">Libraries</div><div class="t" style="left:78.00px;top:470px;transform:scaleX(0.9800);color:#000">Miscellaneous</div><div class="t" style="left:59.00px;top:488px;transform:scaleX(0.9495);color:#000">Cross ARM GNU Create Flash Image</div><div class="t" style="left:78.00px;top:506px;transform:scaleX(0.9268);color:#000">General</div><div class="t" style="left:59.00px;top:524px;transform:scaleX(0.9410);color:#000">Cross ARM GNU Print Size</div><div class="t" style="left:78.00px;top:542px;transform:scaleX(0.9268);color:#000">General</div><div class="t" style="left:279.00px;top:40px;transform:scaleX(1.0057);color:#000">Include paths (-I)</div><div class="t" style="left:279.00px;top:317px;transform:scaleX(1.0130);color:#000">Include files (-include)</div><div class="t" style="left:276.00px;top:66px;transform:scaleX(0.9605);color:#fff">${ProjDirPath}</div><div class="t" style="left:349.00px;top:66px;transform:scaleX(1.1321);color:#fff">/../../../../../</div><div class="t" style="left:410.00px;top:66px;transform:scaleX(0.9945);color:#fff">examples/imx7_colibri_m4/demo_apps/hello_world</div><div class="t" style="left:276.00px;top:81px;transform:scaleX(0.9605);color:#000">${ProjDirPath}</div><div class="t" style="left:349.00px;top:81px;transform:scaleX(1.1321);color:#000">/../../../../../</div><div class="t" style="left:410.00px;top:81px;transform:scaleX(0.9823);color:#000">examples/imx7_colibri_m4</div><div class="t" style="left:276.00px;top:96px;transform:scaleX(0.9605);color:#000">${ProjDirPath}</div><div class="t" style="left:349.00px;top:96px;transform:scaleX(1.1321);color:#000">/../../../../../</div><div class="t" style="left:409.00px;top:96px;transform:scaleX(1.0240);color:#000">platform/CMSIS/Include</div><div class="t" style="left:276.00px;top:111px;transform:scaleX(0.9605);color:#000">${ProjDirPath}</div><div class="t" style="left:349.00px;top:111px;transform:scaleX(1.1321);color:#000">/../../../../../</div><div class="t" style="left:409.00px;top:111px;transform:scaleX(1.0349);color:#000">platform/devices</div><div class="t" style="left:276.00px;top:126px;transform:scaleX(0.9605);color:#000">${ProjDirPath}</div><div class="t" style="left:349.00px;top:126px;transform:scaleX(1.1321);color:#000">/../../../../../</div><div class="t" style="left:409.00px;top:126px;transform:scaleX(1.0270);color:#000">platform/devices/MCIMX7D/startup</div><div class="t" style="left:276.00px;top:141px;transform:scaleX(0.9605);color:#000">${ProjDirPath}</div><div class="t" style="left:349.00px;top:141px;transform:scaleX(1.1321);color:#000">/../../../../../</div><div class="t" style="left:409.00px;top:141px;transform:scaleX(1.0296);color:#000">platform/devices/MCIMX7D/include</div><div class="t" style="left:276.00px;top:156px;transform:scaleX(0.9605);color:#000">${ProjDirPath}</div><div class="t" style="left:349.00px;top:156px;transform:scaleX(1.1321);color:#000">/../../../../../</div><div class="t" style="left:409.00px;top:156px;transform:scaleX(1.0600);color:#000">platform/drivers/inc</div><div class="t" style="left:276.00px;top:171px;transform:scaleX(0.9605);color:#000">${ProjDirPath}</div><div class="t" style="left:349.00px;top:171px;transform:scaleX(1.1321);color:#000">/../../../../../</div><div class="t" style="left:409.00px;top:171px;transform:scaleX(1.0792);color:#000">platform/utilities/inc</div><div class="t" style="left:276.00px;top:186px;transform:scaleX(0.9605);color:#000">${ProjDirPath}</div><div class="t" style="left:349.00px;top:186px;transform:scaleX(1.1321);color:#000">/../../../../../</div><div class="t" style="left:409.00px;top:186px;transform:scaleX(0.9877);color:#000">rtos/FreeRTOS/Source/include</div><div class="t" style="left:276.00px;top:201px;transform:scaleX(0.9605);color:#000">${ProjDirPath}</div><div class="t" style="left:349.00px;top:201px;transform:scaleX(1.1321);color:#000">/../../../../../</div><div class="t" style="left:409.00px;top:201px;transform:scaleX(0.9775);color:#000">rtos/FreeRTOS/Source/portable/GCC/ARM_CM4F</div>
<div class="a" style="left:272px;top:63px;width:440px;height:161px;background:#ffff50;mix-blend-mode:multiply;z-index:2"></div>
</body></html>
